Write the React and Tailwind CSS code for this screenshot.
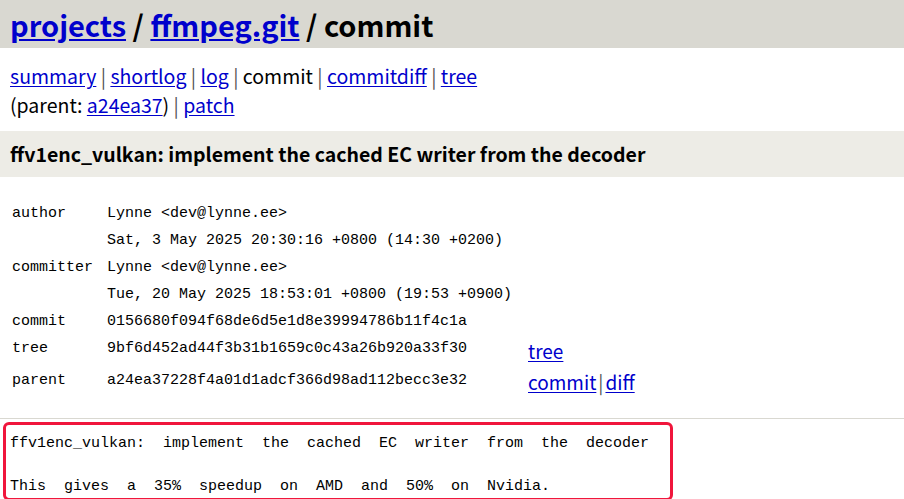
const sans = 'font-["Noto_Sans_CJK_SC","Noto_Sans",sans-serif]'
const mono = 'font-["Liberation_Mono",monospace]'

const Link = ({children}) => (
  <a href="#" className="text-[#0000cc] underline underline-offset-2">
    {children}
  </a>
)

const Sep = () => <span className="text-[#555]"> | </span>

const InfoRow = ({label, value, link, linkClass}) => (
  <div className="flex items-start">
    <div className="w-[95px] shrink-0 leading-[27px]">{label}</div>
    <div className="w-[421px] shrink-0 leading-[27px]">{value}</div>
    {link && (
      <div className={`${sans} text-[19px] leading-[28px] ${linkClass}`}>
        {link}
      </div>
    )}
  </div>
)

export default function App() {
  return (
    <div className={`${sans} bg-white text-black min-h-screen`}>
      {/* page header */}
      <div className="bg-[#d9d8d1] h-[48px] flex items-center px-[10px]">
        <div className="text-[29px] font-bold leading-none">
          <Link>projects</Link> / <Link>ffmpeg.git</Link> / commit
        </div>
      </div>

      {/* nav */}
      <div className="px-[10px] pt-[13px] pb-[12px] text-[19.5px] leading-[29px]">
        <div>
          <Link>summary</Link>
          <Sep />
          <Link>shortlog</Link>
          <Sep />
          <Link>log</Link>
          <Sep />
          commit
          <Sep />
          <Link>commitdiff</Link>
          <Sep />
          <Link>tree</Link>
        </div>
        <div>
          (parent: <Link>a24ea37</Link>)<Sep />
          <Link>patch</Link>
        </div>
      </div>

      {/* commit title */}
      <div className="bg-[#edece6] h-[46px] flex items-center px-[10px]">
        <div className="text-[19.5px] font-bold">
          ffv1enc_vulkan: implement the cached EC writer from the decoder
        </div>
      </div>

      {/* author / committer info */}
      <div className={`${mono} text-[15px] pl-[12px] pt-[23px] pb-[22px] border-b border-[#d9d8d1]`}>
        <InfoRow label="author" value="Lynne <dev@lynne.ee>" />
        <InfoRow label="" value="Sat, 3 May 2025 20:30:16 +0800 (14:30 +0200)" />
        <InfoRow label="committer" value="Lynne <dev@lynne.ee>" />
        <InfoRow label="" value="Tue, 20 May 2025 18:53:01 +0800 (19:53 +0900)" />
        <InfoRow label="commit" value="0156680f094f68de6d5e1d8e39994786b11f4c1a" />
        <InfoRow
          label="tree"
          value="9bf6d452ad44f3b31b1659c0c43a26b920a33f30"
          linkClass="mt-[2px] mb-[2px]"
          link={<Link>tree</Link>}
        />
        <InfoRow
          label="parent"
          value="a24ea37228f4a01d1adcf366d98ad112becc3e32"
          linkClass="mt-[1px]"
          link={
            <>
              <Link>commit</Link>
              <span className="text-[#555] mx-[2px]">|</span>
              <Link>diff</Link>
            </>
          }
        />
      </div>

      {/* commit message */}
      <div className="pt-[3px]">
        <div className="ml-[3px] w-[670px] border-[3px] border-[#f0163c] rounded-[6px] pl-[4px] pt-[8px]">
          <pre className={`${mono} text-[15px] leading-[21.5px] [word-spacing:9px]`}>
            {'ffv1enc_vulkan: implement the cached EC writer from the decoder\n\nThis gives a 35% speedup on AMD and 50% on Nvidia.'}
          </pre>
        </div>
      </div>
    </div>
  )
}
